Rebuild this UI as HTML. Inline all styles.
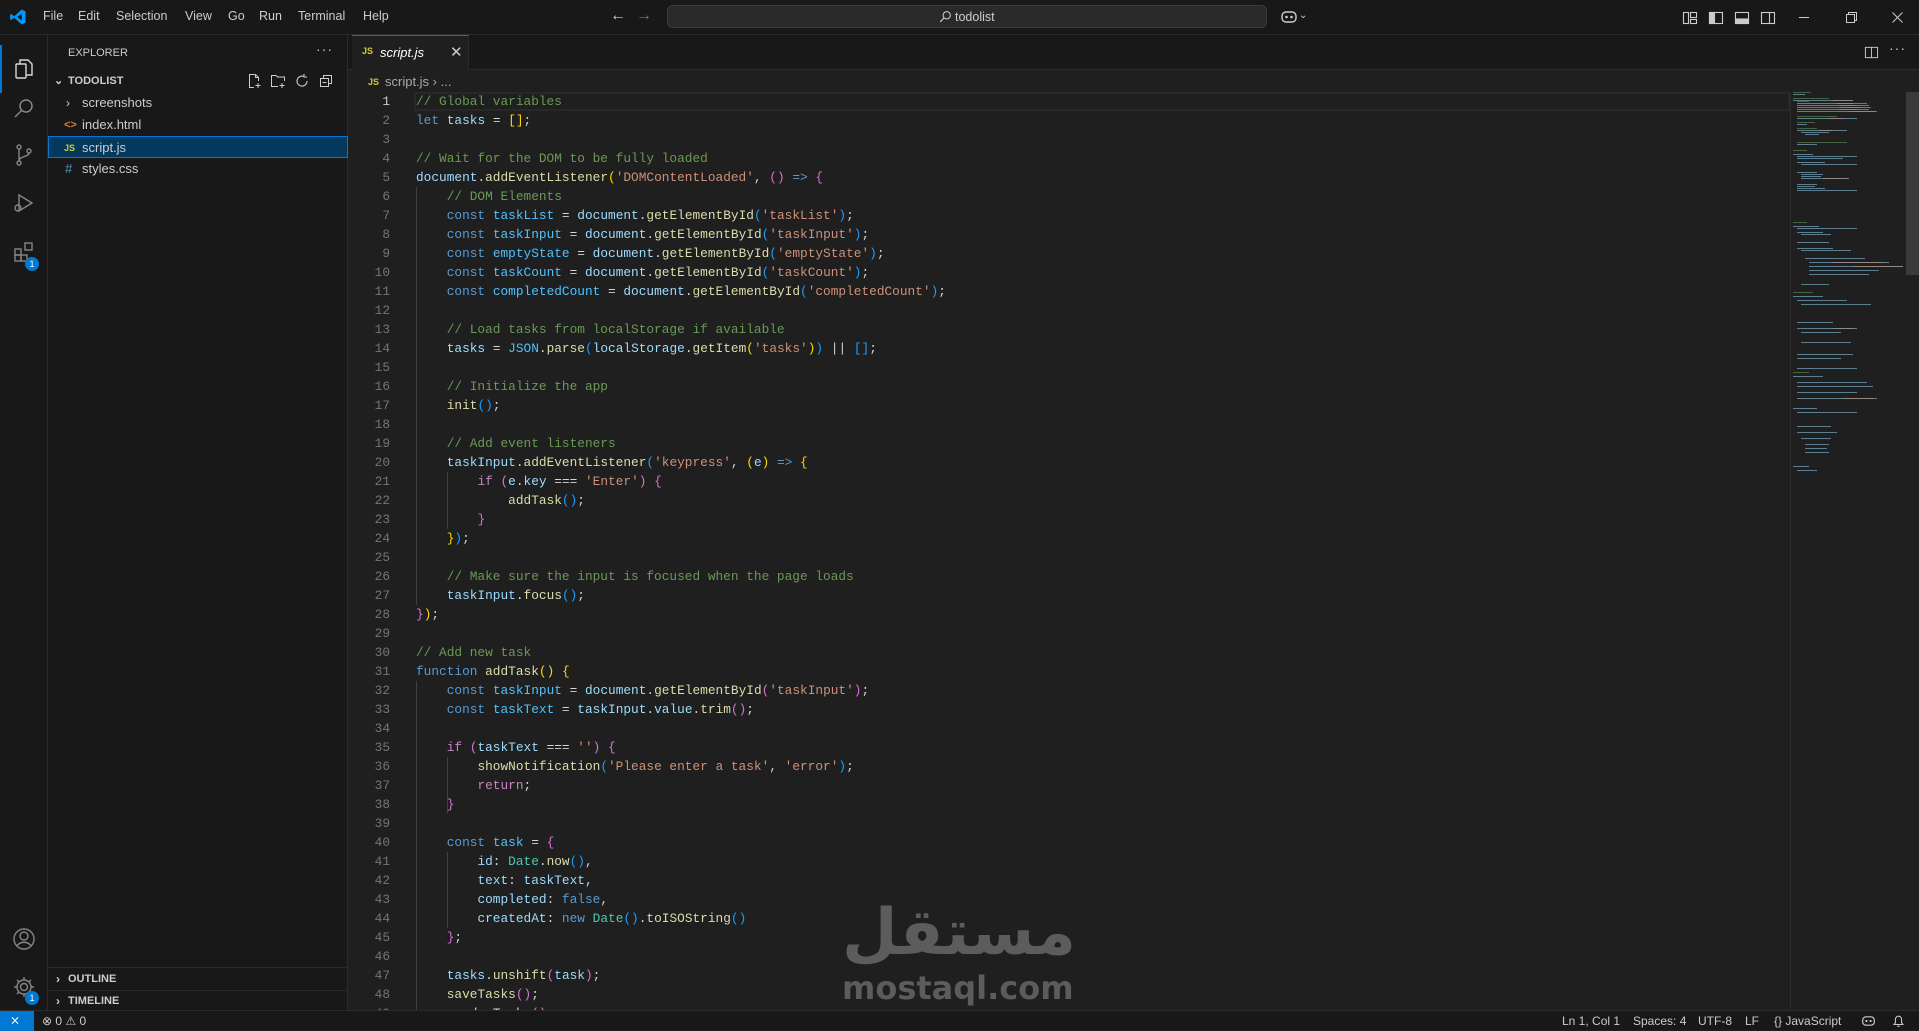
<!DOCTYPE html>
<html><head><meta charset="utf-8">
<style>
*{margin:0;padding:0;box-sizing:border-box}
body{width:1919px;height:1030px;background:#1f1f1f;font-family:"Liberation Sans",sans-serif;color:#cccccc;position:relative;overflow:hidden}
.abs{position:absolute}
#title{left:0;top:0;width:1919px;height:35px;background:#181818;border-bottom:1px solid #2b2b2b}
.menu{top:9px;font-size:12.5px;color:#cccccc}
#act{left:0;top:35px;width:48px;height:976px;background:#181818;border-right:1px solid #2b2b2b}
#side{left:48px;top:35px;width:300px;height:976px;background:#181818;border-right:1px solid #2b2b2b}
#tabs{left:348px;top:35px;width:1571px;height:35px;background:#181818;border-bottom:1px solid #2b2b2b}
#status{left:0;top:1010px;width:1919px;height:20px;background:#181818;border-top:1px solid #2b2b2b;font-size:12px;color:#cccccc}
.side-item{left:0;width:300px;height:22px;font-size:13px;line-height:22px}
pre{font-family:"Liberation Mono",monospace;font-size:12.8px;line-height:19px;color:#d4d4d4}
.c{color:#6a9955}.k{color:#569cd6}.v{color:#9cdcfe}.o{color:#4fc1ff}.f{color:#dcdcaa}.s{color:#ce9178}.p{color:#ffd700}.q{color:#da70d6}.b{color:#179fff}.x{color:#c586c0}.t{color:#4ec9b0}
#ln{left:360px;top:92px;width:30px;text-align:right;color:#6e7681}
#code{left:416px;top:92px}
.guide{width:1px;background:#404040}
svg{display:block}
</style></head><body>

<div id="title" class="abs">
  <svg class="abs" style="left:9px;top:8px" width="18" height="18" viewBox="0 0 24 24"><path d="M17 2 L22 4.5 V19.5 L17 22 L7 13 L3 16 L1.5 15 V9 L3 8 L7 11 L17 2 Z M17 7.5 L11 12 L17 16.5 Z" fill="#0098ff"/></svg>
  <span class="abs menu" style="left:43px">File</span>
  <span class="abs menu" style="left:78px">Edit</span>
  <span class="abs menu" style="left:116px">Selection</span>
  <span class="abs menu" style="left:185px">View</span>
  <span class="abs menu" style="left:228px">Go</span>
  <span class="abs menu" style="left:259px">Run</span>
  <span class="abs menu" style="left:298px">Terminal</span>
  <span class="abs menu" style="left:363px">Help</span>
  <span class="abs" style="left:610px;top:7px;font-size:16px;color:#cccccc">←</span>
  <span class="abs" style="left:636px;top:7px;font-size:16px;color:#7a7a7a">→</span>
  <div class="abs" style="left:667px;top:5px;width:600px;height:23px;background:#2a2a2a;border:1px solid #3c3c3c;border-radius:6px"></div>
  <svg class="abs" style="left:939px;top:10px" width="13" height="13" viewBox="0 0 16 16"><circle cx="9.5" cy="6.5" r="4.5" fill="none" stroke="#ccc" stroke-width="1.3"/><path d="M6 10 L1.5 14.5" stroke="#ccc" stroke-width="1.5"/></svg>
  <span class="abs" style="left:955px;top:10px;font-size:12.5px;color:#cccccc">todolist</span>
  <svg class="abs" style="left:1280px;top:9px" width="18" height="16" viewBox="0 0 18 16"><rect x="2" y="3" width="14" height="10" rx="4" fill="none" stroke="#ccc" stroke-width="1.4"/><circle cx="6.5" cy="8" r="1.3" fill="#ccc"/><circle cx="11.5" cy="8" r="1.3" fill="#ccc"/></svg>
  <span class="abs" style="left:1299px;top:10px;font-size:10px;color:#ccc">⌄</span>
  <svg class="abs" style="left:1682px;top:10px" width="16" height="16" viewBox="0 0 16 16" fill="none" stroke="#ccc" stroke-width="1.1"><rect x="1.5" y="2.5" width="5" height="11"/><rect x="8.5" y="2.5" width="6" height="5"/><rect x="8.5" y="9.5" width="6" height="4"/></svg>
  <svg class="abs" style="left:1708px;top:10px" width="16" height="16" viewBox="0 0 16 16" fill="none" stroke="#ccc" stroke-width="1.1"><rect x="1.5" y="2.5" width="13" height="11"/><rect x="1.5" y="2.5" width="5" height="11" fill="#ccc"/></svg>
  <svg class="abs" style="left:1734px;top:10px" width="16" height="16" viewBox="0 0 16 16" fill="none" stroke="#ccc" stroke-width="1.1"><rect x="1.5" y="2.5" width="13" height="11"/><rect x="1.5" y="9" width="13" height="4.5" fill="#ccc"/></svg>
  <svg class="abs" style="left:1760px;top:10px" width="16" height="16" viewBox="0 0 16 16" fill="none" stroke="#ccc" stroke-width="1.1"><rect x="1.5" y="2.5" width="13" height="11"/><path d="M9.5 2.5 V13.5"/></svg>
  <div class="abs" style="left:1799px;top:17px;width:10px;height:1px;background:#ccc"></div>
  <svg class="abs" style="left:1846px;top:12px" width="11" height="11" viewBox="0 0 11 11" fill="none" stroke="#ccc"><rect x="0.5" y="2.5" width="8" height="8"/><path d="M2.5 2.5 V0.5 H10.5 V8.5 H8.5"/></svg>
  <svg class="abs" style="left:1892px;top:12px" width="11" height="11" viewBox="0 0 11 11" stroke="#ccc"><path d="M0.5 0.5 L10.5 10.5 M10.5 0.5 L0.5 10.5"/></svg>
</div>

<div id="act" class="abs">
  <div class="abs" style="left:0;top:10px;width:2px;height:48px;background:#0078d4"></div>
  <svg class="abs" style="left:12px;top:22px" width="24" height="24" viewBox="0 0 24 24" fill="none" stroke="#d7d7d7" stroke-width="1.4"><path d="M8 7 V3 H16 L20 7 V18 H14"/><rect x="4" y="7" width="10" height="14" rx="1"/></svg>
  <svg class="abs" style="left:12px;top:61px" width="24" height="24" viewBox="0 0 24 24" fill="none" stroke="#868686" stroke-width="1.5"><circle cx="14" cy="10" r="6"/><path d="M9.5 14.5 L3 21"/></svg>
  <svg class="abs" style="left:12px;top:108px" width="24" height="24" viewBox="0 0 24 24" fill="none" stroke="#868686" stroke-width="1.4"><circle cx="7" cy="4" r="2"/><circle cx="7" cy="20" r="2"/><circle cx="17" cy="8" r="2"/><path d="M7 6 V18 M17 10 C17 14 7 13 7 18"/></svg>
  <svg class="abs" style="left:12px;top:156px" width="24" height="24" viewBox="0 0 24 24" fill="none" stroke="#868686" stroke-width="1.4"><path d="M7 4 L20 12 L7 20 Z"/><circle cx="6" cy="17" r="3"/></svg>
  <svg class="abs" style="left:12px;top:205px" width="24" height="24" viewBox="0 0 24 24" fill="none" stroke="#868686" stroke-width="1.4"><rect x="3" y="9" width="6" height="6"/><rect x="3" y="15" width="6" height="6"/><rect x="9" y="15" width="6" height="6"/><rect x="13" y="3" width="7" height="7"/></svg>
  <div class="abs" style="left:25px;top:222px;width:14px;height:14px;border-radius:7px;background:#0078d4;color:#fff;font-size:9px;text-align:center;line-height:14px">1</div>
  <svg class="abs" style="left:12px;top:892px" width="24" height="24" viewBox="0 0 24 24" fill="none" stroke="#868686" stroke-width="1.4"><circle cx="12" cy="12" r="10"/><circle cx="12" cy="9" r="4"/><path d="M5 19 C8 14 16 14 19 19"/></svg>
  <svg class="abs" style="left:12px;top:940px" width="24" height="24" viewBox="0 0 24 24" fill="none" stroke="#868686" stroke-width="1.4"><circle cx="12" cy="12" r="3.5"/><path d="M12 2 V5 M12 19 V22 M2 12 H5 M19 12 H22 M5 5 L7 7 M17 17 L19 19 M5 19 L7 17 M17 7 L19 5"/><circle cx="12" cy="12" r="7"/></svg>
  <div class="abs" style="left:25px;top:956px;width:14px;height:14px;border-radius:7px;background:#0078d4;color:#fff;font-size:9px;text-align:center;line-height:14px">1</div>
</div>

<div id="side" class="abs">
  <span class="abs" style="left:20px;top:12px;font-size:11px;color:#cccccc">EXPLORER</span>
  <span class="abs" style="left:268px;top:6px;font-size:14px;color:#ccc;letter-spacing:1px">···</span>
  <div class="abs side-item" style="top:35px;font-weight:bold;font-size:11px"><span class="abs" style="left:6px;top:0;font-size:11px">⌄</span><span class="abs" style="left:20px">TODOLIST</span></div>
  <svg class="abs" style="left:198px;top:38px" width="16" height="16" viewBox="0 0 16 16" fill="none" stroke="#ccc"><path d="M9.5 1.5 H3.5 V14.5 H8 M9.5 1.5 L12.5 4.5 V8 M9.5 1.5 V4.5 H12.5 M12 10 V15 M9.5 12.5 H14.5"/></svg>
  <svg class="abs" style="left:222px;top:38px" width="16" height="16" viewBox="0 0 16 16" fill="none" stroke="#ccc"><path d="M8 13.5 H1.5 V2.5 H6 L7.5 4 H14.5 V8 M12 10 V15 M9.5 12.5 H14.5"/></svg>
  <svg class="abs" style="left:246px;top:38px" width="16" height="16" viewBox="0 0 16 16" fill="none" stroke="#ccc" stroke-width="1.1"><path d="M13 8 A5 5 0 1 1 10 3.5 M10 1 V4 H13"/></svg>
  <svg class="abs" style="left:270px;top:38px" width="16" height="16" viewBox="0 0 16 16" fill="none" stroke="#ccc"><rect x="2.5" y="5.5" width="8" height="8"/><path d="M5.5 5.5 V2.5 H13.5 V10.5 H10.5 M4.5 9.5 H8.5"/></svg>
  <div class="abs side-item" style="top:57px"><span class="abs" style="left:18px;font-size:12px">›</span><span class="abs" style="left:34px">screenshots</span></div>
  <div class="abs side-item" style="top:79px"><span class="abs" style="left:16px;font-size:11px;color:#e37933;font-weight:bold">&lt;&gt;</span><span class="abs" style="left:34px">index.html</span></div>
  <div class="abs side-item" style="top:101px;background:#04395e;border:1px solid #0078d4"><span class="abs" style="left:15px;font-size:9px;font-weight:bold;color:#cbcb41">JS</span><span class="abs" style="left:33px">script.js</span></div>
  <div class="abs side-item" style="top:123px"><span class="abs" style="left:17px;color:#519aba">#</span><span class="abs" style="left:34px">styles.css</span></div>
  <div class="abs" style="left:0;top:932px;width:300px;height:1px;background:#2b2b2b"></div>
  <div class="abs side-item" style="top:933px;font-weight:bold;font-size:11px"><span class="abs" style="left:8px;font-size:12px">›</span><span class="abs" style="left:20px">OUTLINE</span></div>
  <div class="abs" style="left:0;top:955px;width:300px;height:1px;background:#2b2b2b"></div>
  <div class="abs side-item" style="top:955px;font-weight:bold;font-size:11px"><span class="abs" style="left:8px;font-size:12px">›</span><span class="abs" style="left:20px">TIMELINE</span></div>
</div>

<div id="tabs" class="abs">
  <div class="abs" style="left:4px;top:0;width:117px;height:35px;background:#1f1f1f;border-top:1px solid #0078d4;border-right:1px solid #2b2b2b">
    <span class="abs" style="left:10px;top:10px;font-size:9px;font-weight:bold;color:#cbcb41">JS</span>
    <span class="abs" style="left:28px;top:9px;font-size:13px;font-style:italic;color:#fff">script.js</span>
    <span class="abs" style="left:98px;top:7px;font-size:15px;color:#ccc">✕</span>
  </div>
  <svg class="abs" style="left:1516px;top:10px" width="15" height="15" viewBox="0 0 16 16" fill="none" stroke="#ccc"><rect x="1.5" y="2.5" width="13" height="11"/><path d="M8 2.5 V13.5"/></svg>
  <span class="abs" style="left:1541px;top:5px;font-size:14px;color:#ccc;letter-spacing:1px">···</span>
</div>

<span class="abs" style="left:368px;top:77px;font-size:9px;font-weight:bold;color:#cbcb41">JS</span>
<span class="abs" style="left:385px;top:74px;font-size:13px;color:#a9a9a9">script.js › ...</span>

<div class="abs" style="left:414px;top:92px;width:1376px;height:19px;border:2px solid #282828"></div>
<div class="abs guide" style="left:416px;top:187px;height:418px"></div>
<div class="abs guide" style="left:447px;top:472px;height:57px"></div>
<div class="abs guide" style="left:416px;top:681px;height:329px"></div>
<div class="abs guide" style="left:447px;top:757px;height:57px"></div>
<div class="abs guide" style="left:447px;top:852px;height:76px"></div>

<pre id="ln" class="abs"><span style="color:#cccccc">1</span>
2
3
4
5
6
7
8
9
10
11
12
13
14
15
16
17
18
19
20
21
22
23
24
25
26
27
28
29
30
31
32
33
34
35
36
37
38
39
40
41
42
43
44
45
46
47
48
49</pre>

<pre id="code" class="abs"><span class="c">// Global variables</span>
<span class="k">let</span> <span class="v">tasks</span> = <span class="p">[]</span>;

<span class="c">// Wait for the DOM to be fully loaded</span>
<span class="v">document</span>.<span class="f">addEventListener</span><span class="p">(</span><span class="s">'DOMContentLoaded'</span>, <span class="q">()</span> <span class="k">=&gt;</span> <span class="q">{</span>
    <span class="c">// DOM Elements</span>
    <span class="k">const</span> <span class="o">taskList</span> = <span class="v">document</span>.<span class="f">getElementById</span><span class="b">(</span><span class="s">'taskList'</span><span class="b">)</span>;
    <span class="k">const</span> <span class="o">taskInput</span> = <span class="v">document</span>.<span class="f">getElementById</span><span class="b">(</span><span class="s">'taskInput'</span><span class="b">)</span>;
    <span class="k">const</span> <span class="o">emptyState</span> = <span class="v">document</span>.<span class="f">getElementById</span><span class="b">(</span><span class="s">'emptyState'</span><span class="b">)</span>;
    <span class="k">const</span> <span class="o">taskCount</span> = <span class="v">document</span>.<span class="f">getElementById</span><span class="b">(</span><span class="s">'taskCount'</span><span class="b">)</span>;
    <span class="k">const</span> <span class="o">completedCount</span> = <span class="v">document</span>.<span class="f">getElementById</span><span class="b">(</span><span class="s">'completedCount'</span><span class="b">)</span>;

    <span class="c">// Load tasks from localStorage if available</span>
    <span class="v">tasks</span> = <span class="o">JSON</span>.<span class="f">parse</span><span class="b">(</span><span class="v">localStorage</span>.<span class="f">getItem</span><span class="p">(</span><span class="s">'tasks'</span><span class="p">)</span><span class="b">)</span> || <span class="b">[]</span>;

    <span class="c">// Initialize the app</span>
    <span class="f">init</span><span class="b">()</span>;

    <span class="c">// Add event listeners</span>
    <span class="v">taskInput</span>.<span class="f">addEventListener</span><span class="b">(</span><span class="s">'keypress'</span>, <span class="p">(</span><span class="v">e</span><span class="p">)</span> <span class="k">=&gt;</span> <span class="p">{</span>
        <span class="x">if</span> <span class="q">(</span><span class="v">e</span>.<span class="v">key</span> === <span class="s">'Enter'</span><span class="q">)</span> <span class="q">{</span>
            <span class="f">addTask</span><span class="b">()</span>;
        <span class="q">}</span>
    <span class="p">}</span><span class="b">)</span>;

    <span class="c">// Make sure the input is focused when the page loads</span>
    <span class="v">taskInput</span>.<span class="f">focus</span><span class="b">()</span>;
<span class="q">}</span><span class="p">)</span>;

<span class="c">// Add new task</span>
<span class="k">function</span> <span class="f">addTask</span><span class="p">()</span> <span class="p">{</span>
    <span class="k">const</span> <span class="o">taskInput</span> = <span class="v">document</span>.<span class="f">getElementById</span><span class="q">(</span><span class="s">'taskInput'</span><span class="q">)</span>;
    <span class="k">const</span> <span class="o">taskText</span> = <span class="v">taskInput</span>.<span class="v">value</span>.<span class="f">trim</span><span class="q">()</span>;

    <span class="x">if</span> <span class="q">(</span><span class="v">taskText</span> === <span class="s">''</span><span class="q">)</span> <span class="q">{</span>
        <span class="f">showNotification</span><span class="b">(</span><span class="s">'Please enter a task'</span>, <span class="s">'error'</span><span class="b">)</span>;
        <span class="x">return</span>;
    <span class="q">}</span>

    <span class="k">const</span> <span class="o">task</span> = <span class="q">{</span>
        <span class="v">id</span>: <span class="t">Date</span>.<span class="f">now</span><span class="b">()</span>,
        <span class="v">text</span>: <span class="v">taskText</span>,
        <span class="v">completed</span>: <span class="k">false</span>,
        <span class="v">createdAt</span>: <span class="k">new</span> <span class="t">Date</span><span class="b">()</span>.<span class="f">toISOString</span><span class="b">()</span>
    <span class="q">}</span>;

    <span class="v">tasks</span>.<span class="f">unshift</span><span class="q">(</span><span class="v">task</span><span class="q">)</span>;
    <span class="f">saveTasks</span><span class="q">()</span>;
    <span class="f">renderTasks</span><span class="q">()</span>;</pre>

<svg class="abs" style="left:1793px;top:92px" width="110" height="390" viewBox="0 0 110 390">
<g fill="#6a9955" opacity=".55"><rect x="0" y="0" width="18" height="1"/><rect x="0" y="6" width="36" height="1"/><rect x="4" y="9" width="12" height="1"/><rect x="4" y="24" width="40" height="1"/><rect x="4" y="30" width="18" height="1"/><rect x="4" y="36" width="20" height="1"/><rect x="4" y="50" width="50" height="1"/><rect x="0" y="58" width="14" height="1"/><rect x="0" y="130" width="14" height="1"/><rect x="0" y="200" width="20" height="1"/><rect x="0" y="280" width="16" height="1"/></g>
<g fill="#9cdcfe" opacity=".5"><rect x="0" y="2" width="12" height="1"/><rect x="0" y="8" width="60" height="1"/><rect x="4" y="11" width="70" height="1"/><rect x="4" y="13" width="72" height="1"/><rect x="4" y="15" width="74" height="1"/><rect x="4" y="17" width="72" height="1"/><rect x="4" y="19" width="80" height="1"/><rect x="4" y="26" width="60" height="1"/><rect x="4" y="32" width="10" height="1"/><rect x="4" y="38" width="50" height="1"/><rect x="8" y="40" width="28" height="1"/><rect x="12" y="42" width="14" height="1"/><rect x="4" y="52" width="20" height="1"/><rect x="0" y="62" width="20" height="1"/><rect x="4" y="64" width="60" height="1"/><rect x="4" y="66" width="46" height="1"/><rect x="4" y="70" width="28" height="1"/><rect x="8" y="72" width="56" height="1"/><rect x="4" y="80" width="20" height="1"/><rect x="8" y="82" width="22" height="1"/><rect x="8" y="84" width="20" height="1"/><rect x="8" y="86" width="48" height="1"/><rect x="4" y="92" width="20" height="1"/><rect x="4" y="94" width="18" height="1"/><rect x="4" y="96" width="28" height="1"/><rect x="4" y="98" width="60" height="1"/><rect x="0" y="134" width="26" height="1"/><rect x="4" y="136" width="60" height="1"/><rect x="4" y="140" width="26" height="1"/><rect x="8" y="142" width="30" height="1"/><rect x="4" y="150" width="32" height="1"/><rect x="4" y="156" width="36" height="1"/><rect x="8" y="158" width="50" height="1"/><rect x="12" y="166" width="60" height="1"/><rect x="16" y="170" width="80" height="1"/><rect x="16" y="174" width="100" height="1"/><rect x="16" y="178" width="70" height="1"/><rect x="16" y="182" width="60" height="1"/><rect x="8" y="192" width="28" height="1"/><rect x="0" y="204" width="30" height="1"/><rect x="4" y="208" width="50" height="1"/><rect x="8" y="212" width="70" height="1"/><rect x="4" y="230" width="36" height="1"/><rect x="4" y="236" width="60" height="1"/><rect x="8" y="240" width="40" height="1"/><rect x="8" y="250" width="50" height="1"/><rect x="4" y="262" width="56" height="1"/><rect x="4" y="266" width="44" height="1"/><rect x="4" y="276" width="60" height="1"/><rect x="0" y="284" width="30" height="1"/><rect x="4" y="290" width="70" height="1"/><rect x="4" y="294" width="76" height="1"/><rect x="4" y="300" width="60" height="1"/><rect x="4" y="306" width="80" height="1"/><rect x="0" y="316" width="24" height="1"/><rect x="4" y="320" width="60" height="1"/><rect x="4" y="334" width="34" height="1"/><rect x="4" y="340" width="40" height="1"/><rect x="8" y="346" width="30" height="1"/><rect x="12" y="352" width="24" height="1"/><rect x="12" y="356" width="22" height="1"/><rect x="12" y="360" width="24" height="1"/><rect x="0" y="374" width="16" height="1"/><rect x="4" y="378" width="20" height="1"/></g>
<g fill="#ce9178" opacity=".5"><rect x="40" y="8" width="20" height="1"/><rect x="44" y="11" width="16" height="1"/><rect x="46" y="13" width="18" height="1"/><rect x="48" y="15" width="20" height="1"/><rect x="46" y="17" width="18" height="1"/><rect x="56" y="19" width="26" height="1"/><rect x="36" y="26" width="14" height="1"/><rect x="26" y="38" width="14" height="1"/><rect x="30" y="86" width="24" height="1"/><rect x="40" y="170" width="50" height="1"/><rect x="60" y="174" width="50" height="1"/><rect x="40" y="236" width="20" height="1"/><rect x="50" y="306" width="30" height="1"/></g>
</svg>
<div class="abs" style="left:1790px;top:92px;width:1px;height:918px;background:#2b2b2b"></div>
<div class="abs" style="left:1906px;top:92px;width:13px;height:183px;background:#3a3a3a"></div>

<div class="abs" style="left:830px;top:893px;width:258px;text-align:center;font-family:'DejaVu Sans','Noto Sans CJK SC',sans-serif;font-size:64px;font-weight:bold;color:#5c5c5c;line-height:80px" dir="rtl">مستقل</div>
<div class="abs" style="left:842px;top:970px;font-family:'DejaVu Sans',sans-serif;font-size:32px;font-weight:bold;color:#5c5c5c;line-height:36px">mostaql.com</div>

<div id="status" class="abs">
  <div class="abs" style="left:0;top:0;width:34px;height:20px;background:#0078d4"></div>
  <span class="abs" style="left:10px;top:2px;color:#fff;font-size:12px">⨯</span>
  <span class="abs" style="left:42px;top:3px">⊗ 0 ⚠ 0</span>
  <span class="abs" style="left:1562px;top:3px">Ln 1, Col 1</span>
  <span class="abs" style="left:1633px;top:3px">Spaces: 4</span>
  <span class="abs" style="left:1698px;top:3px">UTF-8</span>
  <span class="abs" style="left:1745px;top:3px">LF</span>
  <span class="abs" style="left:1774px;top:3px">{} JavaScript</span>
  <svg class="abs" style="left:1861px;top:3px" width="15" height="14" viewBox="0 0 18 16"><rect x="2" y="3" width="14" height="10" rx="4" fill="none" stroke="#ccc" stroke-width="1.4"/><circle cx="6.5" cy="8" r="1.3" fill="#ccc"/><circle cx="11.5" cy="8" r="1.3" fill="#ccc"/></svg>
  <svg class="abs" style="left:1892px;top:3px" width="13" height="14" viewBox="0 0 14 16" fill="none" stroke="#ccc" stroke-width="1.2"><path d="M2 12 H12 L10.5 10 V6 A3.5 3.5 0 0 0 3.5 6 V10 Z M5.5 14 H8.5"/></svg>
</div>
</body></html>
